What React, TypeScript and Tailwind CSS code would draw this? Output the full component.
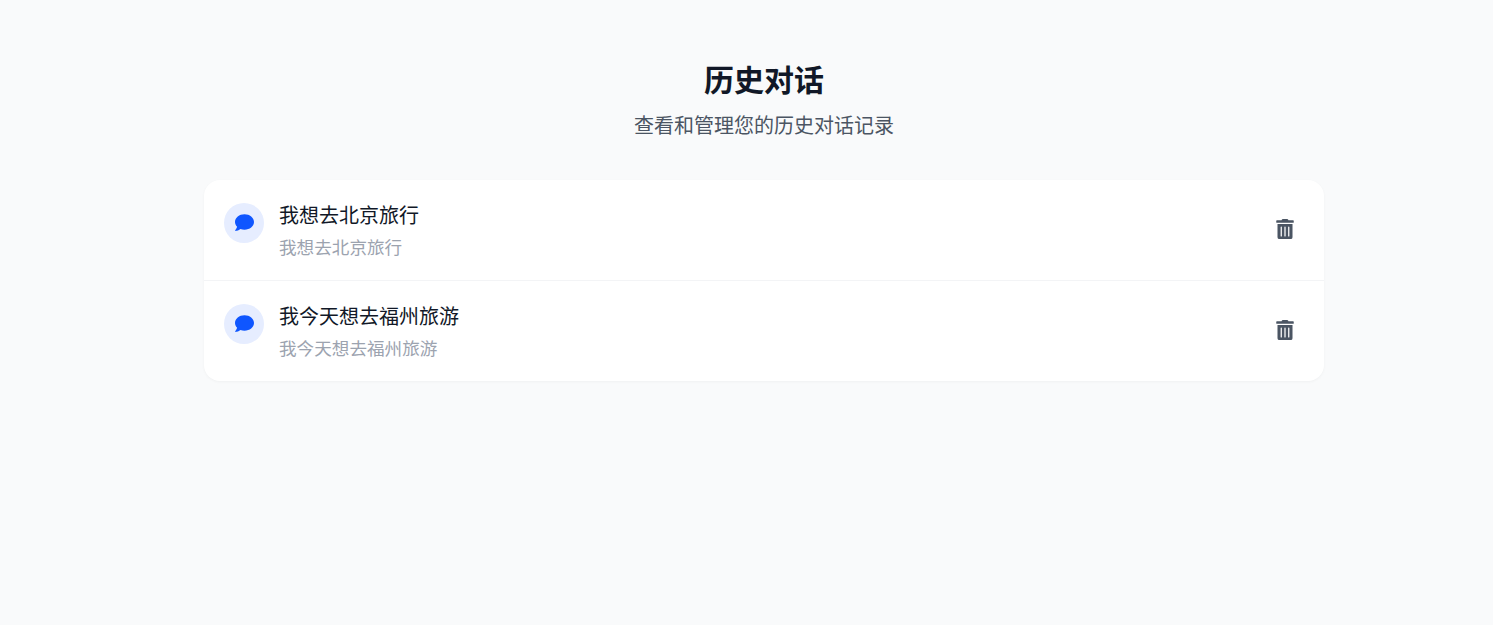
import { FaComment, FaTrashAlt } from "react-icons/fa";

const chats = [
  { id: 1, title: "我想去北京旅行", preview: "我想去北京旅行" },
  { id: 2, title: "我今天想去福州旅游", preview: "我今天想去福州旅游" },
];

const App = () => {
  return (
    <div className="min-h-screen bg-[#f9fafb] font-['Liberation_Sans','Noto_Sans_CJK_SC',sans-serif]">
      <div className="ml-[204px] w-[1120px] pt-[60px]">
        <div className="text-center">
          <h1 className="text-[30px] leading-[42px] font-bold text-[#111827]">历史对话</h1>
          <p className="mt-[10px] text-[20px] leading-7 text-[#4b5563]">查看和管理您的历史对话记录</p>
        </div>
        <div className="mt-10 rounded-2xl bg-white shadow-[0_1px_3px_rgba(0,0,0,0.04)]">
          {chats.map((chat, i) => (
            <div
              key={chat.id}
              className={`flex h-[100px] items-center justify-between px-5 ${i > 0 ? "box-content border-t border-[#f3f4f6]" : ""}`}
            >
              <div className="mt-1 flex items-start gap-[15px]">
                <div className="mt-[1px] flex h-10 w-10 items-center justify-center rounded-full bg-[#e6edff]">
                  <FaComment className="mb-[1px] text-[19px] text-[#0f56ff]" />
                </div>
                <div>
                  <div className="text-[20px] leading-7 text-[#111827]">{chat.title}</div>
                  <div className="mt-1 text-[17.6px] leading-7 text-[#9ca3af]">{chat.preview}</div>
                </div>
              </div>
              <button className="mr-[9px] mb-[2px] text-[#4b5563]">
                <FaTrashAlt className="text-[20px]" />
              </button>
            </div>
          ))}
        </div>
      </div>
    </div>
  );
};

export default App;
